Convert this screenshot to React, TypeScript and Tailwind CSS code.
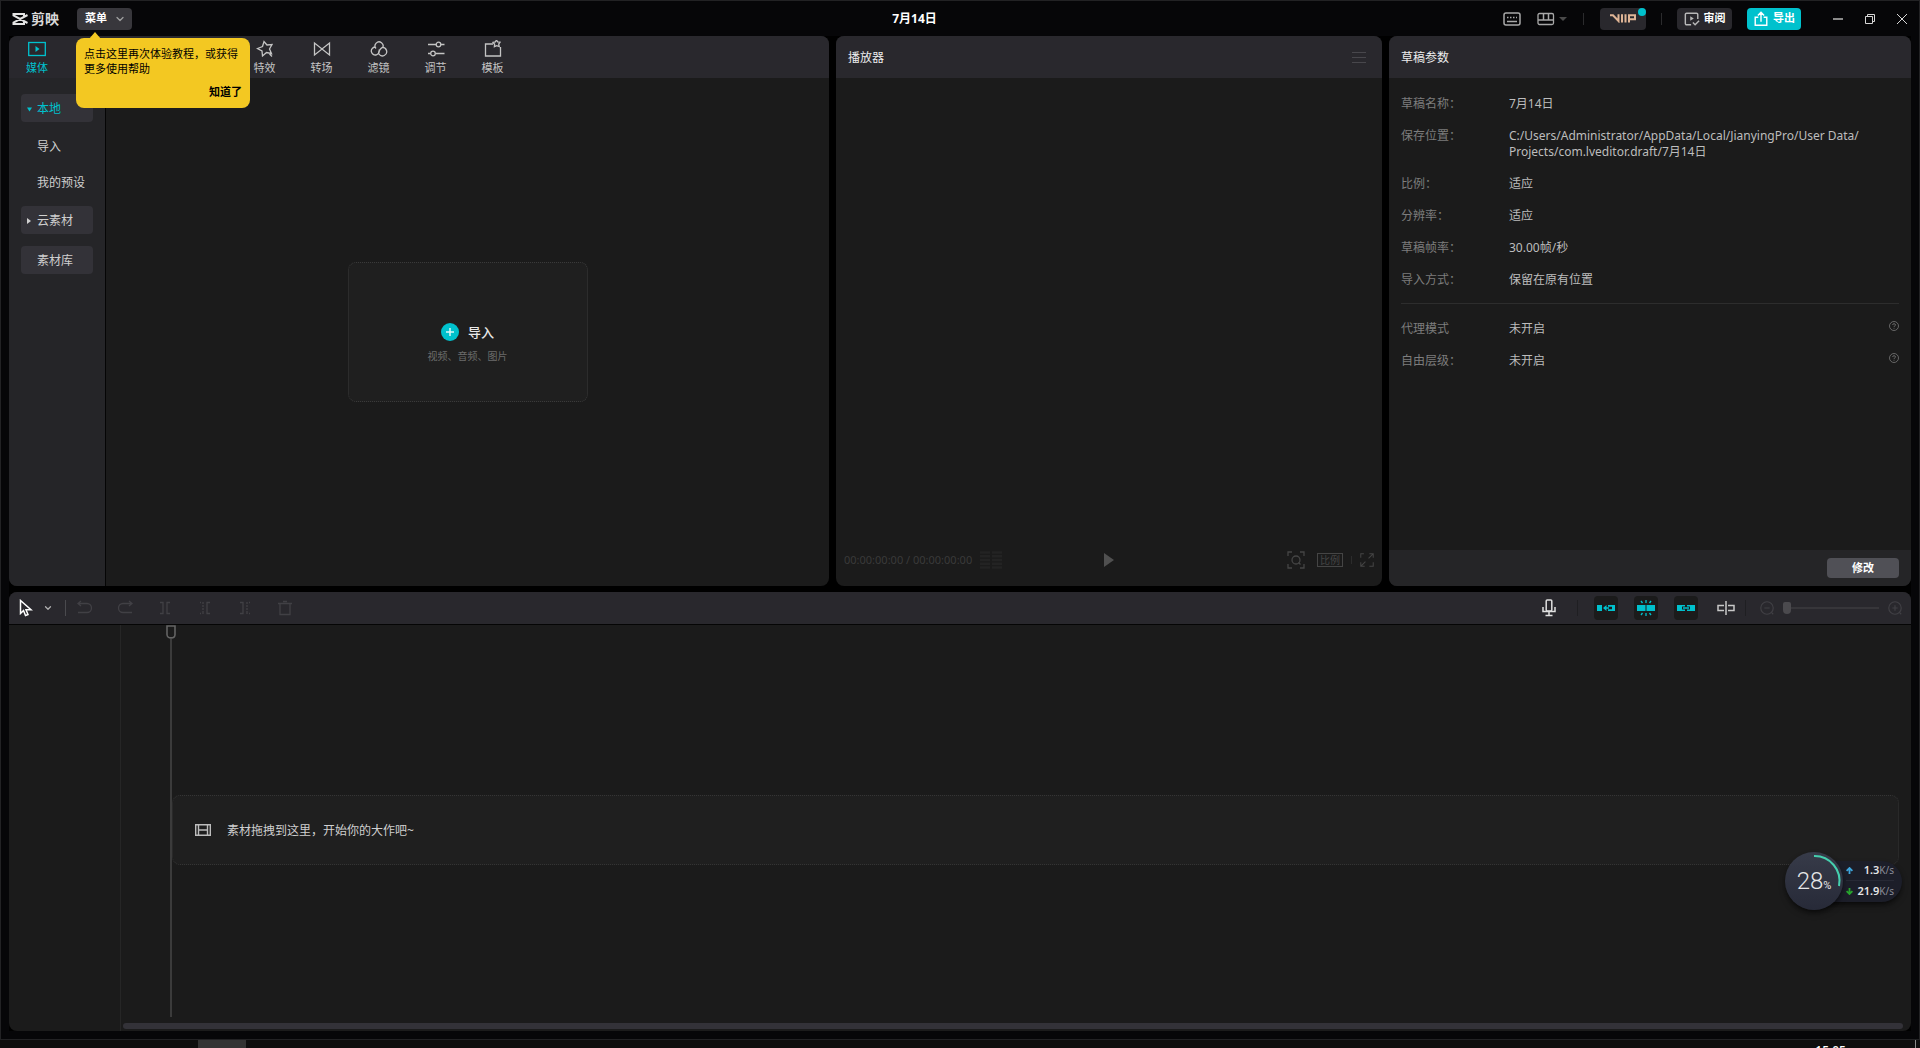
import type { ReactNode } from 'react'
import { ChevronDown } from 'lucide-react'

const mediaTabs = [
  {
    label: '特效',
    icon: (
      <path d="M6.5 6.5 8 1.5l3 3.5 5-.5-2.5 4.500 2 4.500-5-1-4 3.500-.5-5L1.500 8.500z M13.500 14l2.500 2.500" />
    ),
  },
  {
    label: '转场',
    icon: <path d="M1.500 3v12L9 9l7.500 6V3L9 9z" />,
  },
  {
    label: '滤镜',
    icon: (
      <path d="M6 8.500a4 4 0 1 1 6.500-.5M9 9.500a4 4 0 1 1-4-2.500M12 7.500a4.200 4.200 0 1 1-3 6.500M9 14c-1-2 0-4 3-6.500" />
    ),
  },
  {
    label: '调节',
    icon: (
      <>
        <path d="M1 4.500h8M14 4.500h3.500M1 13.500h2.500M8.500 13.500h9" />
        <circle cx="11.500" cy="4.500" r="2.300" />
        <circle cx="6" cy="13.500" r="2.300" />
      </>
    ),
  },
  {
    label: '模板',
    icon: (
      <>
        <path d="M9 4H1.500v12h15V7" />
        <path d="m12.500 0 1.200 2 2.300.2-1.300 2 .5 2.300-2.500-.8-2.300 1 .2-2.400-1.600-1.900 2.400-.5z" />
      </>
    ),
  },
]

// \u200b lets the long path wrap right after the folder separator
const draftInfo = [
  ['草稿名称：', '7月14日'],
  ['保存位置：', 'C:/Users/Administrator/AppData/Local/JianyingPro/User\u00a0Data/\u200bProjects/com.lveditor.draft/7月14日'],
  ['比例：', '适应'],
  ['分辨率：', '适应'],
  ['草稿帧率：', '30.00帧/秒'],
  ['导入方式：', '保留在原有位置'],
]

const advancedInfo = [
  ['代理模式', '未开启'],
  ['自由层级：', '未开启'],
]

const editTools = [
  { label: '撤销', d: 'M5 2 2 4.500 5 7M2 4.500h9a4.500 4.500 0 0 1 0 9H2' },
  { label: '恢复', d: 'm13 2 3 2.500L13 7M16 4.500H7a4.500 4.500 0 0 0 0 9h9' },
  { label: '分割', d: 'M4 3.500h3v11H4M14 3.500h-3v11h3' },
  { label: '向左裁剪', d: 'M14 3.500h-3v11h3M7 3v2M7 6v2M7 9v2M7 12v3M4 3.500h1M4 14.500h1' },
  { label: '向右裁剪', d: 'M4 3.500h3v11H4M11 3v2M11 6v2M11 9v2M11 12v3M13 3.500h1M13 14.500h1' },
  { label: '删除', d: 'M2 4.500h14M7 2.500h4M4 4.500v11h10v-11' },
]

function Icon({ children, className = 'size-[18px]' }: { children: ReactNode; className?: string }) {
  return (
    <svg viewBox="0 0 18 18" fill="none" stroke="currentColor" strokeWidth="1.3" className={className} aria-hidden="true">
      {children}
    </svg>
  )
}

function TitleBar() {
  return (
    <header className="grid h-[35px] shrink-0 grid-cols-[1fr_auto_1fr] items-center">
      <div className="flex items-center pl-[11px]">
        <svg viewBox="0 0 16 14" className="h-3.5 w-4" fill="none" stroke="#e4e4e4" strokeWidth="2" aria-hidden="true">
          <path d="M12 4V2H1.500v1.500L15.500 11M12 10v2H1.500v-1.500L15.500 3" />
        </svg>
        <span className="ml-[3px] text-sm leading-5 font-bold text-[#d8d8d8]">剪映</span>
        <button type="button" className="ml-[18px] flex h-[22px] w-[55px] items-center justify-between rounded bg-[#38373c] pr-1.5 pl-2 text-[11px] font-bold text-white">
          菜单
          <ChevronDown className="size-3 text-[#a0a0a0]" strokeWidth={2.5} />
        </button>
      </div>
      <h1 className="mr-[91px] text-xs font-bold text-white">7月14日</h1>
      <div className="flex items-center justify-end pr-[11px]">
        <button type="button" aria-label="快捷键" className="text-[#a8a8a8]">
          <Icon>
            <rect x="1" y="3" width="16" height="12" rx="2" strokeWidth="1.500" />
            <path d="M4 7.500h1.500M7 7.500h1.500M10 7.500h1.500M13 7.500h1M4 11.500h10" />
          </Icon>
        </button>
        <button type="button" aria-label="布局" className="ml-4 flex items-center gap-1 text-[#a8a8a8]">
          <Icon>
            <rect x="1" y="3.500" width="15.500" height="11" rx="1.500" />
            <path d="M1 10h15.500M6.500 3.500V10M11.500 3.500V10" strokeWidth="1.500" />
          </Icon>
          <svg viewBox="0 0 8 4" className="h-1 w-2 fill-[#4a4a4a]" aria-hidden="true">
            <path d="M0 0h8L4 4z" />
          </svg>
        </button>
        <span className="ml-4 h-3 w-px bg-[#2b2b2d]" />
        <button type="button" className="relative ml-4 flex h-[22px] w-[46px] items-center justify-center rounded bg-[#29282d]" aria-label="VIP">
          <svg viewBox="0 0 26 9" className="h-[9px] w-[26px]" fill="none" stroke="#e0b596" strokeWidth="2" aria-hidden="true">
            <path d="M0 1.200h3L8.500 7V.3M12 .3v8.200M15.500.3v8.200M19 8.500V1.300h6v4h-5" />
          </svg>
          <span className="absolute top-0 right-0 size-2 rounded-full bg-[#00c1cd]" />
        </button>
        <span className="ml-[15px] h-3 w-px bg-[#2b2b2d]" />
        <button type="button" className="ml-[15px] flex h-[22px] w-[55px] items-center justify-center gap-1 rounded bg-[#29282d] text-[11px] font-bold text-white">
          <Icon className="size-4 text-[#b8b8b8]">
            <path d="M8 15.500H3a1.500 1.500 0 0 1-1.500-1.500V4A1.500 1.500 0 0 1 3 2.500h11A1.500 1.500 0 0 1 15.500 4v5M10 13l2.500 2.500 4.500-4.500" strokeWidth="1.600" />
            <path d="M7 6v5l4-2.500z" fill="currentColor" stroke="none" />
          </Icon>
          审阅
        </button>
        <button type="button" className="ml-[15px] flex h-[22px] w-[54px] items-center justify-center gap-1 rounded bg-[#00c1cd] text-[11px] font-bold text-white">
          <Icon className="size-4">
            <path d="M6 7H2.500v9h13V7H12M9 12V2M5.500 5 9 1.500 12.500 5" strokeWidth="1.600" />
          </Icon>
          导出
        </button>
        <div className="ml-[31px] flex gap-5 text-[#d6d6d6]">
          <button type="button" aria-label="最小化">
            <svg viewBox="0 0 12 12" className="size-3" stroke="#8a8a8a" strokeWidth="2" aria-hidden="true">
              <path d="M1 6h10" />
            </svg>
          </button>
          <button type="button" aria-label="还原">
            <svg viewBox="0 0 12 12" className="size-3" fill="none" stroke="currentColor" aria-hidden="true">
              <path d="M1.500 3.500h7v7h-7zM3.500 3.500v-2h7v7h-2" />
            </svg>
          </button>
          <button type="button" aria-label="关闭">
            <svg viewBox="0 0 12 12" className="size-3" fill="none" stroke="currentColor" aria-hidden="true">
              <path d="m1 1 10 10M11 1 1 11" />
            </svg>
          </button>
        </div>
      </div>
    </header>
  )
}

function GuideTip() {
  return (
    <div role="dialog" aria-label="教程提示" className="absolute top-[38px] left-[76px] z-10 flex h-[70px] w-[174px] flex-col rounded-lg bg-[#f3c822] px-2 pt-2 text-[11px] leading-[15px] text-black">
      <svg viewBox="0 0 12 7" className="absolute -top-1.5 left-[13px] h-[7px] w-3 fill-[#f3c822]" aria-hidden="true">
        <path d="M6 0l6 7H0z" />
      </svg>
      <p>点击这里再次体验教程，或获得更多使用帮助</p>
      <button type="button" className="mt-2 self-end font-bold">知道了</button>
    </div>
  )
}

function MediaPanel() {
  return (
    <section className="flex min-w-0 grow-[820] basis-0 flex-col overflow-hidden rounded-lg bg-[#1b1b1b]">
      <nav className="flex h-[42px] shrink-0 bg-[#29282d] text-[11px] leading-4 text-[#c4c4c4]">
        <button type="button" className="flex w-14 flex-col items-center pt-1 text-[#00c1cd]">
          <Icon>
            <rect x=".7" y="2.500" width="16.600" height="13" />
            <path d="M7.500 6v6l4-3z" fill="currentColor" stroke="none" />
          </Icon>
          <span className="mt-0.5">媒体</span>
        </button>
        <div className="ml-[171px] flex">
          {mediaTabs.map((tab) => (
            <button key={tab.label} type="button" className="flex w-[57px] flex-col items-center pt-1">
              <Icon>{tab.icon}</Icon>
              <span className="mt-0.5">{tab.label}</span>
            </button>
          ))}
        </div>
      </nav>
      <div className="flex grow">
        <aside className="flex w-[97px] flex-col border-r border-[#050505] bg-[#252528] px-3 pt-4 text-xs text-[#cfcfcf]">
          <button type="button" className="flex h-7 items-center rounded bg-[#333238] pt-0.5 pl-1.5 text-[#00c1cd]">
            <svg viewBox="0 0 5 5" className="size-[5px] fill-current" aria-hidden="true">
              <path d="M0 .5h5L2.500 4.500z" />
            </svg>
            <span className="ml-[5px]">本地</span>
          </button>
          <div className="flex flex-col py-1.5">
            <button type="button" className="h-9 pt-0.5 pl-4 text-left">导入</button>
            <button type="button" className="h-9 pt-0.5 pl-4 text-left">我的预设</button>
          </div>
          <button type="button" className="flex h-7 items-center rounded bg-[#333238] pt-0.5 pl-1.5">
            <svg viewBox="0 0 4 6" className="h-1.5 w-1 fill-current" aria-hidden="true">
              <path d="M0 0v6l4-3z" />
            </svg>
            <span className="ml-1.5">云素材</span>
          </button>
          <button type="button" className="mt-3 h-7 rounded bg-[#333238] pt-0.5 pl-4 text-left">素材库</button>
        </aside>
        <div className="flex grow items-center justify-center">
          <button type="button" className="flex h-[140px] w-60 flex-col items-center rounded-lg border border-dotted border-[#3a3a3a] bg-[#1f1f1f] pt-[59px]">
            <span className="flex items-center gap-[9px] text-[13px] leading-5 font-medium text-[#e8e8e8]">
              <svg viewBox="0 0 18 18" className="size-[18px]" aria-hidden="true">
                <circle cx="9" cy="9" r="9" fill="#00c1cd" />
                <path d="M9 5v8M5 9h8" stroke="#d9f7f9" strokeWidth="1.500" />
              </svg>
              导入
            </span>
            <span className="mt-1 text-[10px] leading-5 text-[#6c6c6c]">视频、音频、图片</span>
          </button>
        </div>
      </div>
    </section>
  )
}

function PlayerPanel() {
  return (
    <section className="flex min-w-0 grow-[546] basis-0 flex-col overflow-hidden rounded-lg bg-[#1b1b1b]">
      <div className="flex h-[42px] shrink-0 items-center justify-between bg-[#29282d] pt-0.5 pr-4 pl-3">
        <h2 className="text-xs text-[#ededed]">播放器</h2>
        <button type="button" aria-label="播放器菜单">
          <svg viewBox="0 0 14 12" className="h-3 w-3.5" stroke="#48474c" strokeWidth="1.200" aria-hidden="true">
            <path d="M0 .5h14M0 5.500h14M0 10.500h14" />
          </svg>
        </button>
      </div>
      <div className="grow" />
      <div className="grid h-[52px] shrink-0 grid-cols-[1fr_auto_1fr] items-center px-2 text-[#454545]">
        <div className="flex items-center text-[11px] whitespace-pre text-[#3a3a3a]">
          00:00:00:00 / 00:00:00:00
          <svg viewBox="0 0 22 18" className="ml-2 h-[18px] w-[22px]" stroke="#232323" strokeWidth="2.600" aria-hidden="true">
            <path d="M0 1.500h10M12 1.500h10M0 5.200h10M12 5.200h10M0 9h10M12 9h10M0 12.800h10M12 12.800h10M0 16.500h10M12 16.500h10" />
          </svg>
        </div>
        <button type="button" aria-label="播放">
          <svg viewBox="0 0 10 14" className="h-3.5 w-2.5 fill-[#505050]" aria-hidden="true">
            <path d="M0 0v14l10-7z" />
          </svg>
        </button>
        <div className="flex items-center justify-end">
          <button type="button" aria-label="缩放画面">
            <Icon>
              <path d="M1 5V1h4M13 1h4v4M17 13v4h-4M5 17H1v-4" />
              <circle cx="9" cy="9" r="4" />
              <path d="m11.500 11.500 2 2" />
            </Icon>
          </button>
          <button type="button" className="ml-3 flex h-3.5 w-[26px] items-center justify-center border border-[#454545] text-[10px] leading-none">
            比例
          </button>
          <span className="ml-2 h-2 w-px bg-[#2c2c2c]" />
          <button type="button" aria-label="全屏" className="ml-2">
            <Icon className="size-3.5">
              <path d="M1 6V1h4M12 1h5v5M17 12v5h-5M6 17H1v-5M16.500 1.500 11 7M1.500 16.500 7 11" />
            </Icon>
          </button>
        </div>
      </div>
    </section>
  )
}

function DraftPanel() {
  return (
    <section className="flex min-w-0 grow-[522] basis-0 flex-col overflow-hidden rounded-lg bg-[#1b1b1b]">
      <h2 className="flex h-[42px] shrink-0 items-center bg-[#29282d] px-3 pt-0.5 text-xs text-[#ededed]">草稿参数</h2>
      <div className="grow px-3 pt-[18px] text-xs leading-4">
        <dl className="flex flex-col gap-4 border-b border-[#2d2d2d] pb-[15px]">
          {draftInfo.map(([name, value]) => (
            <div key={name} className="flex">
              <dt className="w-[108px] shrink-0 text-[#7d7d7d]">{name}</dt>
              <dd className="max-w-[372px] break-words text-[#bdbdbd]">{value}</dd>
            </div>
          ))}
        </dl>
        <dl className="flex flex-col gap-4 pt-[17px]">
          {advancedInfo.map(([name, value]) => (
            <div key={name} className="flex">
              <dt className="w-[108px] shrink-0 text-[#7d7d7d]">{name}</dt>
              <dd className="grow text-[#bdbdbd]">{value}</dd>
              <dd className="text-[#7a7a7a]">
                <svg viewBox="0 0 10 10" className="size-2.5" fill="none" stroke="currentColor" strokeWidth=".8" role="img" aria-label="说明">
                  <circle cx="5" cy="5" r="4.500" />
                  <path d="M3.600 4c0-1.800 2.900-1.800 2.900 0C6.500 4.900 5 4.900 5 6M5 6.800v.9" />
                </svg>
              </dd>
            </div>
          ))}
        </dl>
      </div>
      <div className="flex h-9 shrink-0 items-center justify-end bg-[#252527] pr-3">
        <button type="button" className="h-5 w-[72px] rounded bg-[#505056] text-[11px] font-bold text-white">修改</button>
      </div>
    </section>
  )
}

function TimelineToolbar() {
  return (
    <div className="flex h-[33px] shrink-0 items-center border-b border-[#050505] bg-[#29282d]">
      <button type="button" aria-label="选择工具" className="ml-2 flex items-center gap-2 text-white">
        <Icon className="size-[18px]">
          <path d="M3.500 1.500v13l3-3 2 5 2.500-1-2-4.800H14z" strokeWidth="1.500" />
        </Icon>
        <ChevronDown className="size-2.5 text-[#b0b0b0]" strokeWidth={3} />
      </button>
      <span className="ml-3 h-4 w-px bg-[#4a4a4e]" />
      <div className="ml-2.5 flex gap-[22px] text-[#414045]">
        {editTools.map((tool) => (
          <button key={tool.label} type="button" aria-label={tool.label} disabled>
            <Icon>
              <path d={tool.d} />
            </Icon>
          </button>
        ))}
      </div>
      <div className="ml-auto flex items-center pr-2">
        <button type="button" aria-label="录音" className="text-[#e0e0e0]">
          <Icon>
            <rect x="6.200" y="1" width="5.600" height="11" rx="1" strokeWidth="1.500" />
            <path d="M3 8v4.500h12V8M9 12.500V16M5.500 16.500h7" strokeWidth="1.500" />
          </Icon>
        </button>
        <span className="ml-[19px] h-4 w-px bg-[#1f1f22]" />
        <div className="ml-4 flex gap-4 text-[#00c1cd]">
          <button type="button" aria-label="主轨磁吸" className="flex size-6 items-center justify-center rounded bg-[#1b1b1b]">
            <Icon>
              <path d="M0 6h5v6H0zM9.500 6v6L6 9zM11 6h7v6h-7v-1.800h4V7.800h-4z" fill="currentColor" stroke="none" />
              <path d="M9 9h3" />
            </Icon>
          </button>
          <button type="button" aria-label="自动吸附" className="flex size-6 items-center justify-center rounded bg-[#1b1b1b]">
            <Icon>
              <path d="M0 6h8.500v6H0zM9.500 6H18v6H9.500z" fill="currentColor" stroke="none" />
              <path d="M9 1v3M9 14v3M4 2l1.500 2M14 2l-1.500 2M4 16l1.500-2M14 16l-1.500-2" />
            </Icon>
          </button>
          <button type="button" aria-label="联动" className="flex size-6 items-center justify-center rounded bg-[#1b1b1b]">
            <Icon>
              <path d="M0 6h8v1.500H5v3h3V12H0zM18 6h-8v1.500h3v3h-3V12h8z" fill="currentColor" stroke="none" />
              <path d="M6 9h6" />
            </Icon>
          </button>
        </div>
        <button type="button" aria-label="预览轴" className="ml-[19px] text-[#c8c8c8]">
          <Icon>
            <path d="M7 6.500H1v5h6M11 6.500h6v5h-6M9 2v14" strokeWidth="1.500" />
          </Icon>
        </button>
        <span className="ml-2.5 h-4 w-px bg-[#1f1f22]" />
        <button type="button" aria-label="缩小时间线" className="ml-[13px] text-[#414045]">
          <Icon className="size-4">
            <circle cx="9" cy="9" r="7" />
            <path d="M6 9h6M14 14l2 2" />
          </Icon>
        </button>
        <input
          type="range"
          aria-label="时间线缩放"
          defaultValue={0}
          className="ml-2 h-3 w-24 appearance-none bg-transparent [&::-webkit-slider-runnable-track]:h-0.5 [&::-webkit-slider-runnable-track]:bg-[#37363a] [&::-webkit-slider-thumb]:-mt-[5px] [&::-webkit-slider-thumb]:h-3 [&::-webkit-slider-thumb]:w-2 [&::-webkit-slider-thumb]:appearance-none [&::-webkit-slider-thumb]:rounded-t-xs [&::-webkit-slider-thumb]:rounded-b [&::-webkit-slider-thumb]:bg-[#4b4a4e]"
        />
        <button type="button" aria-label="放大时间线" className="ml-2 text-[#414045]">
          <Icon className="size-4">
            <circle cx="9" cy="9" r="7" />
            <path d="M6 9h6M9 6v6M14 14l2 2" />
          </Icon>
        </button>
      </div>
    </div>
  )
}

function Timeline() {
  return (
    <section className="flex min-h-0 grow-[439] basis-0 flex-col overflow-hidden rounded-lg bg-[#1b1b1b]">
      <TimelineToolbar />
      <div className="flex grow">
        <div className="w-28 shrink-0 border-r border-[#262626]" />
        <div className="flex min-w-0 grow flex-col pr-2 pb-0.5 pl-0.5">
          <div className="flex grow pr-1 pl-[43px]">
            <div className="mb-1.5 flex w-2.5 shrink-0 flex-col items-center">
              <svg viewBox="0 0 10 14" className="h-3.5 w-2.5 shrink-0" fill="none" stroke="#646464" strokeWidth="1.600" aria-hidden="true">
                <path d="M1 1h8v8.500c0 4.500-8 4.500-8 0z" />
              </svg>
              <div className="w-0.5 grow bg-[#3b3b3b]" />
            </div>
            <div className="-ml-1 flex grow flex-col pt-[170px]">
              <div className="flex h-[70px] items-center rounded-lg border border-dotted border-[#353535] bg-[#1f1f1f] pl-[22px] text-xs text-[#cfcfcf]">
                <svg viewBox="0 0 16 12" className="h-3 w-4" fill="none" stroke="#bdbdbd" strokeWidth="1.400" aria-hidden="true">
                  <path d="M.7.7h14.600v10.600H.7zM3.500.7v10.600M12.500.7v10.600M3.500 6h9" />
                </svg>
                <p className="ml-4 pt-0.5">素材拖拽到这里，开始你的大作吧~</p>
              </div>
            </div>
          </div>
          <div className="h-1.5 rounded-full bg-[#333238]" />
        </div>
      </div>
    </section>
  )
}

function NetMonitor() {
  return (
    <div className="absolute right-[18px] bottom-[138px] flex h-[58px] w-[117px] items-center text-[#e6e6e6]">
      <div className="absolute right-0 h-[41px] w-[88px] rounded-r-full bg-[#1c1e29] pr-2 pl-8 shadow-md shadow-black/50">
        <div className="flex h-5 items-center border-b border-[#272935] text-[11px] font-semibold">
          <svg viewBox="0 0 7 7" className="size-[7px] shrink-0" fill="none" stroke="#3da5dc" strokeWidth="1.800" aria-hidden="true">
            <path d="M3.500 7V1M.6 3.800 3.500 1l2.900 2.800" />
          </svg>
          <span className="ml-auto">1.3</span>
          <span className="text-[10px] font-normal text-[#8a8c98]">K/s</span>
        </div>
        <div className="flex h-[22px] items-center text-[11px] font-semibold">
          <svg viewBox="0 0 7 7" className="size-[7px] shrink-0" fill="none" stroke="#28a52e" strokeWidth="1.800" aria-hidden="true">
            <path d="M3.500 0v6M.6 3.200 3.500 6l2.900-2.800" />
          </svg>
          <span className="ml-auto">21.9</span>
          <span className="text-[10px] font-normal text-[#8a8c98]">K/s</span>
        </div>
      </div>
      <div className="relative flex size-[58px] items-center justify-center rounded-full bg-linear-to-b from-[#373b49] to-[#272a38] shadow-md shadow-black/50">
        <svg viewBox="0 0 58 58" className="absolute inset-0 size-[58px]" fill="none" stroke="#45cfae" strokeWidth="2" aria-hidden="true">
          <path d="M29 4a25 25 0 0 1 25 30" />
        </svg>
        <span className="flex items-baseline font-['Roboto'] text-2xl leading-none font-light">
          28<span className="text-[11px] font-normal">%</span>
        </span>
      </div>
    </div>
  )
}

export default function App() {
  return (
    <div className="relative flex h-screen min-h-[700px] flex-col overflow-hidden bg-black font-['Noto_Sans','Noto_Sans_CJK_SC',sans-serif]">
      <div className="flex min-h-0 grow flex-col border border-[#222224] bg-[#060608]">
        <TitleBar />
        <main className="mx-2 mb-2 flex min-h-0 grow flex-col gap-1.5 bg-black">
          <div className="flex min-h-0 grow-[550] basis-0 gap-[7px]">
            <MediaPanel />
            <PlayerPanel />
            <DraftPanel />
          </div>
          <Timeline />
        </main>
      </div>
      <footer className="flex h-2 shrink-0 overflow-hidden bg-[#0e0e0e]">
        <div className="ml-[198px] h-2 w-12 bg-[#333333]" />
        <time className="mt-[3px] mr-[69px] ml-auto text-xs leading-4 font-medium text-white">15:05</time>
        <span className="mr-1 h-2 w-px bg-[#8a8a8a]" />
      </footer>
      <GuideTip />
      <NetMonitor />
    </div>
  )
}
